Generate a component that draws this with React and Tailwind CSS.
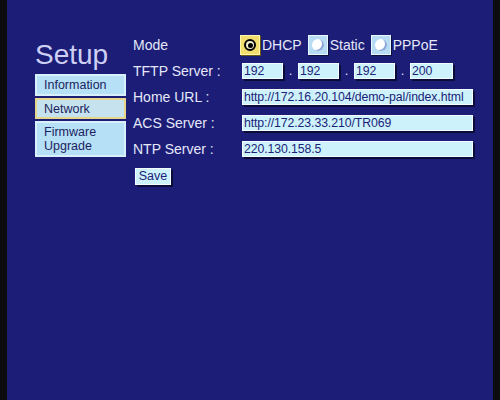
import React from "react";

const font = { fontFamily: '"Liberation Sans", Arial, sans-serif' };

// Left menu of the setup pages
const menu = [
  { label: "Information", active: false, h: "h-[22px]" },
  { label: "Network", active: true, h: "h-[21px]" },
  { label: "Firmware Upgrade", active: false, h: "h-[36px]" },
];

const Radio = ({ label, checked }) => (
  <div className="flex items-center gap-[2px]">
    <div
      className={
        "flex h-[20px] w-[20px] items-center justify-center border " +
        (checked
          ? "border-[#fff6b0] bg-[#f2de6e] shadow-[1px_1px_0_#6b5a10]"
          : "border-[#e8f8ff] bg-[#b8dcf4] shadow-[1px_1px_0_#0d0f40]")
      }
    >
      {checked ? (
        <div className="flex h-[12px] w-[12px] items-center justify-center rounded-full border-2 border-black bg-[#f4f0d0]">
          <div className="h-[5px] w-[5px] rounded-full bg-black" />
        </div>
      ) : (
        <div className="h-[12px] w-[12px] rounded-full bg-white shadow-[-2px_-1px_0_#8aa8d8_inset]" />
      )}
    </div>
    <span className="text-[14px] text-[#e4e8fa]">{label}</span>
  </div>
);

const Field = ({ value, w }) => (
  <div
    className={
      "h-[16px] overflow-hidden whitespace-nowrap border border-[#f4fcff] bg-[#cdf2fc] pl-[1px] text-[12.3px] leading-[14px] tracking-[-0.1px] text-[#1c1e78] shadow-[2px_2px_0_#0b0c3a] " +
      w
    }
  >
    {value}
  </div>
);

const Row = ({ label, children }) => (
  <div className="flex h-[26px] items-center">
    <div className="w-[109px] text-[14px] text-[#e4e8fa]">{label}</div>
    {children}
  </div>
);

export default function App() {
  return (
    <div className="flex h-[400px] w-[500px] bg-[#0c0c10]" style={font}>
      <div className="w-[7px]" />
      <div className="flex flex-1 bg-[#1c1d76]">
        {/* sidebar */}
        <div className="flex w-[126px] flex-col pl-[28px] pt-[38px]">
          <div className="text-[28px] leading-[33px] text-[#cdd0f4]">Setup</div>
          <div className="mt-[3px] flex w-[91px] flex-col gap-[2px]">
            {menu.map((m) => (
              <div
                key={m.label}
                className={
                  "flex items-center border-2 px-[7px] text-[12.5px] leading-[14px] text-[#1c1e60] " +
                  m.h +
                  (m.active
                    ? " border-[#e6d68a] bg-[#c6e2ee]"
                    : " border-[#d8f0fc] bg-[#b6e0f6]")
                }
              >
                {m.label}
              </div>
            ))}
          </div>
        </div>

        {/* network form */}
        <div className="flex flex-col pt-[32px]">
          <Row label="Mode">
            <div className="-ml-[2px] flex items-center gap-[6px]">
              <Radio label="DHCP" checked />
              <Radio label="Static" />
              <Radio label="PPPoE" />
            </div>
          </Row>
          <Row label="TFTP Server :">
            <div className="flex items-center">
              <Field value="192" w="w-[41px]" />
              <span className="w-[15px] text-center text-[13px] text-[#e4e8fa]">.</span>
              <Field value="192" w="w-[41px]" />
              <span className="w-[15px] text-center text-[13px] text-[#e4e8fa]">.</span>
              <Field value="192" w="w-[41px]" />
              <span className="w-[15px] text-center text-[13px] text-[#e4e8fa]">.</span>
              <Field value="200" w="w-[43px]" />
            </div>
          </Row>
          <Row label="Home URL :">
            <Field value="http://172.16.20.104/demo-pal/index.html" w="w-[231px]" />
          </Row>
          <Row label="ACS Server :">
            <Field value="http://172.23.33.210/TR069" w="w-[231px]" />
          </Row>
          <Row label="NTP Server :">
            <Field value="220.130.158.5" w="w-[231px]" />
          </Row>
          <div className="mt-[6px] pl-[2px]">
            <div className="flex h-[17px] w-[36px] items-center justify-center border border-[#f4fcff] bg-[#cdf2fc] text-[12.5px] text-[#1c1e78] shadow-[2px_2px_0_#0b0c3a]">
              Save
            </div>
          </div>
        </div>
      </div>
      <div className="w-[7px]" />
    </div>
  );
}
